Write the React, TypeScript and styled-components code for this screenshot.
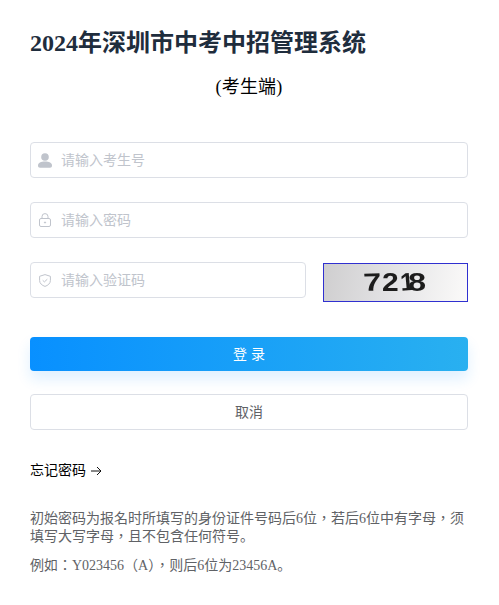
import React from 'react';
import styled, { createGlobalStyle } from 'styled-components';

const GlobalStyle = createGlobalStyle`
  html, body {
    margin: 0;
    padding: 0;
    background: #fff;
  }
  * {
    box-sizing: border-box;
  }
`;

const Page = styled.div`
  width: 499px;
  height: 605px;
  padding: 28px 31px 0 30px;
  overflow: hidden;
  background: #fff;
  font-family: "Liberation Serif", "Noto Sans CJK SC", serif;
`;

const Title = styled.h1`
  margin: 0;
  font-size: 24px;
  line-height: 30px;
  font-weight: 700;
  color: #1f2d3d;
`;

const Subtitle = styled.div`
  margin-top: 14px;
  text-align: center;
  font-size: 18px;
  line-height: 30px;
  letter-spacing: 0.2px;
  color: #000;
`;

const Form = styled.form`
  display: flex;
  flex-direction: column;
  gap: 24px;
  margin-top: 40px;
`;

const InputBox = styled.label`
  display: flex;
  align-items: center;
  flex: 1 0 auto;
  height: 36px;
  padding-left: 7px;
  gap: 9px;
  background: #fff;
  border: 1px solid #dcdfe6;
  border-radius: 4px;
`;

const IconSlot = styled.span`
  display: flex;
  width: 14px;
  justify-content: center;
  color: #c0c4cc;
`;

const TextInput = styled.input`
  flex: 1;
  width: 0;
  min-width: 0;
  border: 0;
  outline: 0;
  padding: 0;
  font: 14px "Liberation Sans", "Noto Sans CJK SC", sans-serif;
  color: #606266;
  &::placeholder {
    color: #c0c4cc;
    opacity: 1;
  }
`;

const CaptchaRow = styled.div`
  display: flex;
  align-items: flex-start;
  gap: 17px;
`;

const CaptchaImage = styled.div`
  flex: none;
  width: 145px;
  height: 39px;
  margin-top: 1px;
  border: 1px solid #3030d0;
  background: linear-gradient(100deg, #cfcecf 0%, #e4e4e6 50%, #fbfaf9 100%);
  svg {
    display: block;
  }
`;

const LoginButton = styled.button`
  display: block;
  width: 100%;
  height: 34px;
  margin-top: 35px;
  padding: 0 0 2px;
  border: 0;
  border-radius: 4px;
  background: linear-gradient(90deg, #0890ff 0%, #29b0f0 100%);
  box-shadow: 0 8px 14px rgba(30, 150, 255, 0.14);
  color: #fff;
  font: 14px "Liberation Sans", "Noto Sans CJK SC", sans-serif;
`;

const CancelButton = styled.button`
  display: block;
  width: 100%;
  height: 36px;
  margin-top: 23px;
  padding: 0 0 2px;
  border: 1px solid #dcdfe6;
  border-radius: 4px;
  background: #fff;
  color: #606266;
  font: 14px "Liberation Sans", "Noto Sans CJK SC", sans-serif;
`;

const ForgotLink = styled.a`
  display: flex;
  align-items: center;
  gap: 5px;
  margin-top: 33px;
  font-size: 14px;
  line-height: 16px;
  color: #000;
`;

const Notice = styled.p`
  margin: 32px 0 0;
  font-family: "Liberation Serif", "Noto Sans CJK TC", serif;
  font-size: 14px;
  line-height: 16px;
  color: #606266;
  & + & {
    margin-top: 11px;
  }
`;

const Stop = styled.span`
  font-family: "Noto Sans CJK SC", sans-serif;
`;

const UserIcon = () => (
  <svg width="14" height="15" viewBox="0 0 14 15" fill="currentColor">
    <circle cx="7" cy="4" r="3.800" />
    <path d="M0 12.500c0-2.700 3-4 7-4s7 1.300 7 4c0 1.500-.8 2.200-2 2.200H2c-1.200 0-2-.7-2-2.200z" />
  </svg>
);

const LockIcon = () => (
  <svg width="12" height="14" viewBox="0 0 12 14" fill="none" stroke="currentColor" strokeWidth="1">
    <rect x="0.500" y="5.500" width="11" height="8" rx="1.500" />
    <path d="M3 5.500V3.600a3 3 0 0 1 6 0v1.900" />
    <circle cx="6" cy="9.500" r="0.600" fill="currentColor" />
  </svg>
);

const ShieldIcon = () => (
  <svg width="12" height="13" viewBox="0 0 12 13" fill="none" stroke="currentColor" strokeWidth="1">
    <path d="M6 .6l5.400 1.700v4.200c0 3-2.400 4.900-5.400 5.900-3-1-5.400-2.900-5.400-5.900V2.300z" />
    <path d="M3.700 6.300l1.700 1.600 2.900-2.700" />
  </svg>
);

const ArrowIcon = () => (
  <svg width="11" height="10" viewBox="0 0 11 10" fill="none" stroke="#111" strokeWidth="1">
    <path d="M0 5h10M6 1l4 4-4 4" />
  </svg>
);

// the captcha is a distorted picture, so its digits are placed one by one
const CaptchaDigits = () => (
  <svg width="143" height="37" viewBox="0 0 143 37" fill="#1d1d1d" fontFamily="Liberation Sans, sans-serif" fontWeight="700" fontSize="25">
    <defs>
      <filter id="soft"><feGaussianBlur stdDeviation="0.6" /></filter>
    </defs>
    <g filter="url(#soft)">
      <text transform="translate(40 27) scale(1.3 1) rotate(-3)">7</text>
      <text transform="translate(58 27) scale(1.2 1)">2</text>
      <text transform="translate(77 27) scale(1 1) rotate(-5)">1</text>
      <text transform="translate(84 27) scale(1.3 1)">8</text>
    </g>
  </svg>
);

export default function App() {
  return (
    <Page>
      <GlobalStyle />
      <Title>2024年深圳市中考中招管理系统</Title>
      <Subtitle>(考生端)</Subtitle>
      <Form onSubmit={e => e.preventDefault()}>
        <InputBox>
          <IconSlot><UserIcon /></IconSlot>
          <TextInput placeholder="请输入考生号" />
        </InputBox>
        <InputBox>
          <IconSlot><LockIcon /></IconSlot>
          <TextInput placeholder="请输入密码" />
        </InputBox>
        <CaptchaRow>
          <InputBox>
            <IconSlot><ShieldIcon /></IconSlot>
            <TextInput placeholder="请输入验证码" />
          </InputBox>
          <CaptchaImage><CaptchaDigits /></CaptchaImage>
        </CaptchaRow>
      </Form>
      <LoginButton type="button">登 录</LoginButton>
      <CancelButton type="button">取消</CancelButton>
      <ForgotLink>忘记密码 <ArrowIcon /></ForgotLink>
      <Notice>初始密码为报名时所填写的身份证件号码后6位，若后6位中有字母，须<br />填写大写字母，且不包含任何符号<Stop>。</Stop></Notice>
      <Notice>例如：Y023456（A），则后6位为23456A<Stop>。</Stop></Notice>
    </Page>
  );
}
